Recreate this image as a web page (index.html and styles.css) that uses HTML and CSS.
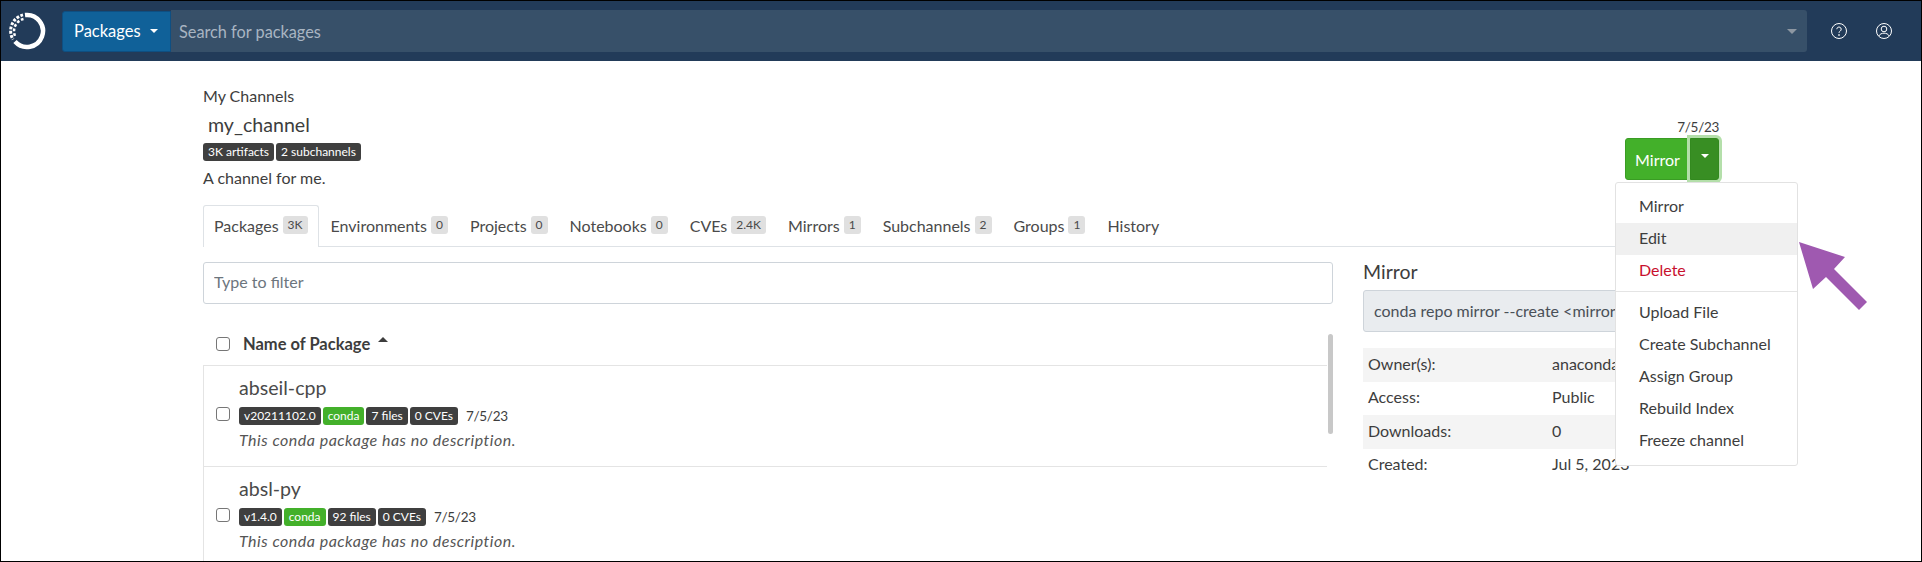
FILE: index.html
```html
<!DOCTYPE html>
<html lang="en">

<head>
    <meta charset="UTF-8">
    <meta name="viewport" content="width=device-width, initial-scale=1.0">
    <title>my_channel</title>
    <link rel="stylesheet" href="styles.css">
</head>

<body>
    <div class="frame">
        <nav class="navbar">
            <a class="logo" href="#">
                <svg width="38" height="38" viewBox="0 0 38 38" fill="none" stroke="#fff">
                    <path d="M17 3.100a16 16 0 1 1 -10 26.500" stroke-width="4.500" />
                    <path d="M15 2.900a16.500 16.500 0 0 0 -10 24.500" stroke-width="3" stroke-dasharray="2.800 1.500" />
                    <path d="M15.500 7a12.500 12.500 0 0 0 -8 18" stroke-width="2.500" stroke-dasharray="2.800 1.800" />
                </svg>
            </a>
            <div class="search">
                <button class="search-type">Packages<span class="caret"></span></button>
                <div class="search-box">
                    <input class="search-input" type="text" placeholder="Search for packages">
                    <span class="search-caret"></span>
                </div>
            </div>
            <div class="nav-icons">
                <svg width="18" height="18" viewBox="0 0 18 18" fill="none" stroke="#fff" stroke-width="1">
                    <circle cx="9" cy="9" r="7.500" />
                    <path d="M6.800 7.200a2.200 2.200 0 1 1 3.500 1.800c-.8.500-1.300 1-1.300 1.800" />
                    <circle cx="9" cy="13" r=".5" />
                </svg>
                <svg width="18" height="18" viewBox="0 0 18 18" fill="none" stroke="#fff" stroke-width="1">
                    <circle cx="9" cy="9" r="7.500" />
                    <circle cx="9" cy="7" r="2.800" />
                    <path d="M3.800 14c1-2 3-2.800 5.200-2.800s4.200.8 5.200 2.800" />
                </svg>
            </div>
        </nav>

        <main class="page">
            <header class="channel-head">
                <div>
                    <div class="crumb">My Channels</div>
                    <h1 class="channel-name">my_channel</h1>
                    <div class="badges">
                        <span class="badge">3K artifacts</span>
                        <span class="badge">2 subchannels</span>
                    </div>
                    <p class="channel-desc">A channel for me.</p>
                </div>
                <div class="channel-actions">
                    <div class="channel-date">7/5/23</div>
                    <div class="btn-group">
                        <button class="btn-main">Mirror</button>
                        <button class="btn-toggle"><span class="caret"></span></button>
                    </div>
                </div>
            </header>

            <ul class="tabs">
                <li class="tab active">Packages <span class="count">3K</span></li>
                <li class="tab">Environments <span class="count">0</span></li>
                <li class="tab">Projects <span class="count">0</span></li>
                <li class="tab">Notebooks <span class="count">0</span></li>
                <li class="tab">CVEs <span class="count">2.4K</span></li>
                <li class="tab">Mirrors <span class="count">1</span></li>
                <li class="tab">Subchannels <span class="count">2</span></li>
                <li class="tab">Groups <span class="count">1</span></li>
                <li class="tab">History</li>
            </ul>

            <div class="columns">
                <section class="packages">
                    <input class="filter" type="text" placeholder="Type to filter">
                    <div class="list-head">
                        <input class="check" type="checkbox">
                        <strong>Name of Package</strong>
                        <span class="sort-caret"></span>
                    </div>
                    <div class="list">
                        <div class="scrollbar"></div>
                        <div class="item">
                            <input class="check" type="checkbox">
                            <div>
                                <div class="item-name">abseil-cpp</div>
                                <div class="badges">
                                    <span class="badge">v20211102.0</span>
                                    <span class="badge green">conda</span>
                                    <span class="badge">7 files</span>
                                    <span class="badge">0 CVEs</span>
                                    <span class="item-date">7/5/23</span>
                                </div>
                                <em class="item-desc">This conda package has no description.</em>
                            </div>
                        </div>
                        <div class="item">
                            <input class="check" type="checkbox">
                            <div>
                                <div class="item-name">absl-py</div>
                                <div class="badges">
                                    <span class="badge">v1.4.0</span>
                                    <span class="badge green">conda</span>
                                    <span class="badge">92 files</span>
                                    <span class="badge">0 CVEs</span>
                                    <span class="item-date">7/5/23</span>
                                </div>
                                <em class="item-desc">This conda package has no description.</em>
                            </div>
                        </div>
                    </div>
                </section>

                <aside class="side">
                    <h2 class="side-title">Mirror</h2>
                    <div class="code-box">conda repo mirror --create &lt;mirror_name&gt;</div>
                    <table class="info">
                        <tr><td>Owner(s):</td><td>anaconda</td></tr>
                        <tr><td>Access:</td><td>Public</td></tr>
                        <tr><td>Downloads:</td><td>0</td></tr>
                        <tr><td>Created:</td><td>Jul 5, 2023</td></tr>
                    </table>
                </aside>
            </div>
        </main>

        <!-- open dropdown of the Mirror button -->
        <ul class="menu">
            <li>Mirror</li>
            <li class="hover">Edit</li>
            <li class="danger">Delete</li>
            <li class="divider"></li>
            <li>Upload File</li>
            <li>Create Subchannel</li>
            <li>Assign Group</li>
            <li>Rebuild Index</li>
            <li>Freeze channel</li>
        </ul>

        <!-- annotation arrow -->
        <svg class="pointer" width="80" height="80" viewBox="0 0 80 80">
            <polygon points="5,4 51,19 40,31 73,64 65,72 32,39 19,51" fill="#9f59b0" />
        </svg>
    </div>
</body>

</html>
```

FILE: styles.css
```css
* {
    box-sizing: border-box;
}

body {
    margin: 0;
    font-family: "Lato", "Open Sans", sans-serif;
    font-size: 16px;
    color: #3d3d3d;
    background: #fff;
}

.frame {
    position: relative;
    height: 562px;
    border: 1px solid #000;
    overflow: hidden;
}

.navbar {
    display: flex;
    align-items: center;
    height: 60px;
    background: #223b59;
}

.logo {
    display: flex;
    width: 61px;
    padding-left: 7px;
}

.search {
    display: flex;
    align-items: center;
    width: 1746px;
}

.search-type {
    display: flex;
    align-items: center;
    width: 109px;
    height: 41px;
    padding: 0 0 0 11px;
    border: 1px solid #0e4f82;
    border-radius: 3px 0 0 3px;
    background: #106199;
    color: #fff;
    font: inherit;
    font-size: 16.500px;
}

.caret {
    display: inline-block;
    margin-left: 9px;
    border-top: 4px solid #fff;
    border-left: 4px solid transparent;
    border-right: 4px solid transparent;
}

.search-box {
    display: flex;
    align-items: center;
    width: 1636px;
    height: 42px;
    padding: 0 10px 0 8px;
    border-radius: 0 3px 3px 0;
    background: #375069;
}

.search-input {
    flex: 1;
    padding: 0;
    border: none;
    outline: none;
    background: none;
    color: #fff;
    font: inherit;
    font-size: 16.300px;
}

.search-input::placeholder {
    color: #a9b5c2;
    opacity: 1;
}

.search-caret {
    border-top: 5px solid #8d97a2;
    border-left: 5px solid transparent;
    border-right: 5px solid transparent;
}

.nav-icons {
    display: flex;
    gap: 27px;
    margin-left: 22px;
}

.page {
    padding: 24px 0 0 202px;
    width: 1718px;
}

.channel-head {
    display: flex;
    justify-content: space-between;
    align-items: flex-start;
    height: 120px;
}

.crumb {
    line-height: 22px;
}

.channel-name {
    margin: 4px 0 4px 5px;
    font-size: 19.600px;
    font-weight: 400;
    line-height: 28px;
}

.badges {
    display: flex;
    align-items: center;
    gap: 2px;
}

.badge {
    height: 18px;
    padding: 0 5px;
    border-radius: 3px;
    background: #3f3f3f;
    color: #fff;
    font-size: 12px;
    line-height: 18px;
}

.badge.green {
    background: #43b02a;
}

.channel-desc {
    margin: 6px 0 0;
    line-height: 22px;
}

.channel-actions {
    display: flex;
    flex-direction: column;
    align-items: flex-end;
    align-self: flex-end;
    padding-bottom: 25px;
}

.channel-date,
.item-date {
    font-size: 13.500px;
    letter-spacing: -.3px;
}

.channel-date {
    line-height: 21px;
}

.btn-group {
    display: flex;
    height: 42px;
}

.btn-main {
    width: 65px;
    border: 1px solid #3a9c24;
    border-radius: 3px 0 0 3px;
    background: #43b02a;
    color: #fff;
    font: inherit;
}

.btn-toggle {
    display: flex;
    align-items: center;
    justify-content: center;
    width: 29px;
    padding: 0 0 6px;
    border: 1px solid #338a1f;
    border-radius: 0 3px 3px 0;
    background: #388e23;
    box-shadow: 0 0 0 3px #b4dfaa;
}

.btn-toggle .caret {
    margin: 0;
}

.tabs {
    display: flex;
    height: 42px;
    margin: 0;
    padding: 0;
    border-bottom: 1px solid #dee2e6;
    list-style: none;
}

.tab {
    display: flex;
    align-items: center;
    gap: 4px;
    height: 42px;
    padding: 0 10px 3px;
    border: 1px solid transparent;
    border-bottom: none;
    color: #4a4a4a;
}

.tab.active {
    margin-right: 1px;
    border-color: #dee2e6;
    border-radius: 3px 3px 0 0;
    background: #fff;
}

.count {
    height: 18px;
    padding: 0 5px;
    border-radius: 3px;
    background: #e0e0e0;
    font-size: 12px;
    line-height: 18px;
}

.columns {
    display: grid;
    grid-template-columns: 1130px 357px;
    gap: 30px;
}

.filter {
    display: block;
    width: 100%;
    height: 42px;
    margin-top: 15px;
    padding: 0 10px 3px;
    border: 1px solid #ced4da;
    border-radius: 3px;
    outline: none;
    font: inherit;
}

.filter::placeholder {
    color: #6c757d;
    opacity: 1;
}

.check {
    flex: none;
    width: 14px;
    height: 14px;
    margin: 0;
    border: 1px solid #767676;
    border-radius: 3px;
    background: #fff;
    appearance: none;
}

.list-head {
    display: flex;
    align-items: center;
    height: 61px;
    padding: 18px 0 0 13px;
}

.list-head strong {
    margin-left: 13px;
    font-size: 16.500px;
}

.sort-caret {
    margin: 0 0 8px 8px;
    border-bottom: 5px solid #3d3d3d;
    border-left: 5px solid transparent;
    border-right: 5px solid transparent;
}

.list {
    position: relative;
    width: 1124px;
    border-top: 1px solid #e4e4e4;
    border-left: 1px solid #e4e4e4;
}

.scrollbar {
    position: absolute;
    top: -32px;
    right: -6px;
    width: 5px;
    height: 100px;
    border-radius: 3px;
    background: #c8c8c8;
}

.item {
    display: flex;
    gap: 9px;
    height: 101px;
    padding: 8px 0 0 12px;
    border-bottom: 1px solid #e4e4e4;
}

.item .check {
    margin-top: 33px;
}

.item-name {
    margin-bottom: 6px;
    font-size: 19.600px;
    line-height: 27px;
    color: #4a4a4a;
}

.item-date {
    margin-left: 6px;
}

.item-desc {
    display: block;
    margin-top: 5px;
    line-height: 20px;
    letter-spacing: .5px;
    color: #555;
}

.side-title {
    margin: 0;
    padding-top: 10px;
    font-size: 19.500px;
    font-weight: 400;
    line-height: 30px;
}

.code-box {
    height: 42px;
    margin-top: 3px;
    padding: 0 10px;
    border: 1px solid #ced4da;
    border-radius: 3px;
    background: #e9ecef;
    line-height: 40px;
    white-space: nowrap;
    color: #495057;
}

.info {
    width: 100%;
    margin-top: 16px;
    border-collapse: collapse;
    color: #3d3d3d;
}

.info td {
    height: 33.500px;
    padding: 0 5px 3px;
}

.info td:first-child {
    width: 184px;
}

.info tr:nth-child(odd) {
    background: #f4f4f4;
}

.menu {
    position: absolute;
    top: 181px;
    left: 1614px;
    width: 183px;
    margin: 0;
    padding: 8px 0;
    border: 1px solid #e2e2e2;
    border-radius: 3px;
    background: #fff;
    list-style: none;
}

.menu li {
    height: 32px;
    padding-left: 23px;
    line-height: 29px;
    color: #3d3d3d;
}

.menu li.hover {
    background: #f0f0f0;
}

.menu li.danger {
    color: #c8102e;
}

.menu li.divider {
    height: 10px;
    background: linear-gradient(#e4e4e4, #e4e4e4) no-repeat 0 4px / 100% 1px;
}

.pointer {
    position: absolute;
    top: 237px;
    left: 1793px;
}
```
